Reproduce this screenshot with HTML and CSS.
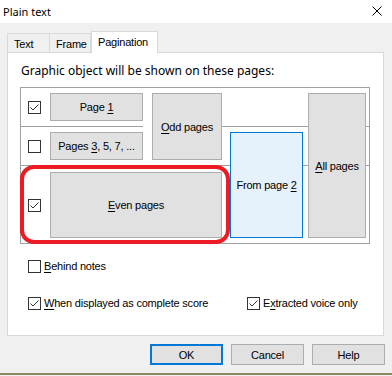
FILE: index.html
```html
<!DOCTYPE html>
<html lang="en">
<head>
  <meta charset="UTF-8" />
  <title>Plain text</title>
  <link rel="stylesheet" href="styles.css">
</head>
<body>
  <div class="window">
    <div class="titlebar">
      <span class="title">Plain text</span>
      <svg class="close" width="10" height="10" viewBox="0 0 10 10">
        <path d="M0.5 0.5 L9.5 9.5 M9.5 0.5 L0.5 9.5" stroke="#000" stroke-width="1" fill="none" />
      </svg>
    </div>

    <div class="tabs">
      <div class="tab tab-text">Text</div>
      <div class="tab tab-frame">Frame</div>
      <div class="tab tab-pagination active">Pagination</div>
    </div>

    <div class="panel">
      <p class="intro">Graphic object will be shown on these pages:</p>

      <div class="pages">
        <div class="divider div-1a"></div>
        <div class="divider div-1b"></div>
        <div class="divider div-2"></div>

        <span class="box checked cb-1"><svg width="11" height="11" viewBox="0 0 11 11"><path d="M1.5 5.5 L4 8 L9.5 2.5" stroke="#333" fill="none" /></svg></span>
        <button class="btn page-1">Page&nbsp;<u>1</u></button>

        <span class="box cb-2"></span>
        <button class="btn pages-3">Pages&nbsp;<u>3</u>, 5, 7, ...</button>

        <button class="btn odd"><u>O</u>dd pages</button>

        <span class="box checked cb-3"><svg width="11" height="11" viewBox="0 0 11 11"><path d="M1.5 5.5 L4 8 L9.5 2.5" stroke="#333" fill="none" /></svg></span>
        <button class="btn even"><u>E</u>ven pages</button>

        <button class="btn from">From page&nbsp;<u>2</u></button>
        <button class="btn all"><u>A</u>ll pages</button>

        <div class="highlight"></div>
      </div>

      <div class="option behind">
        <span class="box"></span>
        <span><u>B</u>ehind notes</span>
      </div>

      <div class="option-row">
        <div class="option">
          <span class="box checked"><svg width="11" height="11" viewBox="0 0 11 11"><path d="M1.5 5.5 L4 8 L9.5 2.5" stroke="#333" fill="none" /></svg></span>
          <span><u>W</u>hen displayed as complete score</span>
        </div>
        <div class="option">
          <span class="box checked"><svg width="11" height="11" viewBox="0 0 11 11"><path d="M1.5 5.5 L4 8 L9.5 2.5" stroke="#333" fill="none" /></svg></span>
          <span>E<u>x</u>tracted voice only</span>
        </div>
      </div>
    </div>

    <div class="actions">
      <button class="btn action default">OK</button>
      <button class="btn action">Cancel</button>
      <button class="btn action">Help</button>
    </div>

    <div class="edge"></div>
  </div>
</body>
</html>
```

FILE: styles.css
```css
body {
  margin: 0;
  font-family: "Liberation Sans", Arial, sans-serif;
  font-size: 11px;
  letter-spacing: -0.2px;
  color: #000;
}

.window {
  width: 392px;
  height: 376px;
  background-color: #f0f0f0;
  display: flex;
  flex-direction: column;
  overflow: hidden;
}

.titlebar {
  height: 23px;
  background-color: #fff;
  display: flex;
  align-items: center;
  justify-content: space-between;
  padding: 0 10px 0 3px;
  flex-shrink: 0;
}

.title {
  font-family: "Noto Sans", sans-serif;
  font-size: 11px;
  letter-spacing: 0;
  line-height: 16px;
}

.close {
  margin-top: -1px;
}

/* tab strip */
.tabs {
  display: flex;
  align-items: flex-end;
  height: 21px;
  margin: 8px 0 0 7px;
  flex-shrink: 0;
}

.tab {
  box-sizing: border-box;
  height: 19px;
  border: 1px solid #d9d9d9;
  border-bottom: none;
  background-color: #f0f0f0;
  display: flex;
  align-items: center;
  line-height: 16px;
  padding: 1px 0 0 6px;
}

.tab-text {
  width: 43px;
}

.tab-frame {
  width: 42px;
  margin-left: -1px;
}

.tab-pagination {
  width: 67px;
  margin-left: 0;
}

.tab.active {
  height: 22px;
  margin-bottom: -1px;
  background-color: #fff;
  position: relative;
  z-index: 1;
  padding: 0 0 2px 6px;
}

.panel {
  box-sizing: border-box;
  width: 377px;
  height: 284px;
  margin-left: 7px;
  border: 1px solid #d9d9d9;
  background-color: #fff;
  padding: 10px 0 0 12px;
  flex-shrink: 0;
}

.intro {
  margin: 0 0 8px 1px;
  font-family: "Noto Sans", sans-serif;
  font-size: 12px;
  letter-spacing: 0;
  line-height: 16px;
}

/* page selection grid */
.pages {
  box-sizing: border-box;
  width: 350px;
  border: 1px solid #a0a0a0;
  display: grid;
  grid-template-columns: 29px 93px 9px 70px 8px 73px 5px 58px 3px;
  grid-template-rows: 5px 28px 5px 1px 5px 28px 5px 1px 6px 66px 5px;
}

.divider {
  background-color: #a0a0a0;
}

.div-1a { grid-area: 4 / 1 / 5 / 3; }
.div-1b { grid-area: 4 / 5 / 5 / 10; }
.div-2 { grid-area: 8 / 1 / 9 / 10; }

.cb-1 { grid-area: 2 / 1 / 3 / 2; }
.cb-2 { grid-area: 6 / 1 / 7 / 2; }
.cb-3 { grid-area: 10 / 1 / 11 / 2; }

.pages .box {
  align-self: center;
  margin-left: 7px;
}

.page-1 { grid-area: 2 / 2 / 3 / 3; }
.pages-3 { grid-area: 6 / 2 / 7 / 3; }
.odd { grid-area: 2 / 4 / 7 / 5; }
.even { grid-area: 10 / 2 / 11 / 5; }
.from { grid-area: 6 / 6 / 11 / 7; }
.all { grid-area: 2 / 8 / 11 / 9; }

.highlight {
  grid-area: 8 / 1 / 12 / 6;
  box-sizing: border-box;
  border: 4px solid #ed1c24;
  border-radius: 14px;
  margin-left: -1px;
  margin-bottom: -1px;
  z-index: 2;
}

.btn {
  box-sizing: border-box;
  font-family: inherit;
  font-size: 11px;
  letter-spacing: -0.2px;
  color: #000;
  background-color: #e1e1e1;
  border: 1px solid #adadad;
  margin: 0;
  padding: 0;
  display: flex;
  align-items: center;
  justify-content: center;
  white-space: nowrap;
  line-height: 14px;
}

.btn.from {
  background-color: #e5f1fb;
  border-color: #0078d7;
}

.btn u {
  text-underline-offset: 2px;
}

/* checkboxes */
.box {
  box-sizing: border-box;
  width: 13px;
  height: 13px;
  border: 1px solid #333;
  background-color: #fff;
  display: flex;
  align-items: center;
  justify-content: center;
  flex-shrink: 0;
}

.option {
  display: flex;
  align-items: center;
  gap: 3px;
  line-height: 14px;
}

.option u {
  text-underline-offset: 2px;
}

.behind {
  margin: 15px 0 0 8px;
}

.option-row {
  display: grid;
  grid-template-columns: 219px auto;
  margin: 23px 0 0 8px;
}

/* dialog buttons */
.actions {
  display: flex;
  justify-content: flex-end;
  gap: 8px;
  margin: 8px 7px 0 0;
}

.action {
  width: 73px;
  height: 21px;
}

.action.default {
  border: 2px solid #0078d7;
}

.edge {
  margin-top: auto;
  height: 2px;
  margin-bottom: 1px;
  background-color: #8f8560;
}
```
